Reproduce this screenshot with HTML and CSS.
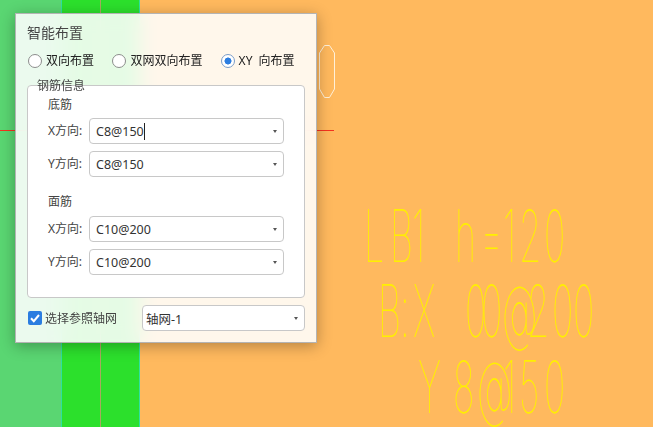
FILE: index.html
```html
<!DOCTYPE html>
<html lang="zh-CN">
<head>
  <meta charset="UTF-8" />
  <title>智能布置</title>
  <link rel="stylesheet" href="styles.css">
</head>
<body>
  <div class="canvas">
    <div class="strip-light"></div>
    <div class="strip-green"><div class="axis-line"></div></div>
    <div class="strip-orange"></div>

    <svg class="drawing" width="653" height="427" viewBox="0 0 653 427">
      <line class="red" x1="0" y1="130.5" x2="334" y2="130.5" />
      <polygon class="octagon" points="324.5,45.5 329.5,45.5 334.5,53 334.5,89 329.5,97.5 324.5,97.5 319.5,89 319.5,53" />
      <g transform="scale(0.5 1)">
        <text class="cad" x="728 780 824 870 910 960 1006 1038 1088" y="262">LB1 h=120</text>
        <text class="cad" x="756 800 826 900 930 962 1004 1054 1104 1146" y="337">B:X 00@200</text>
        <text class="cad" x="836 880 906 954 1006 1038 1088" y="413">Y 8@150</text>
      </g>
    </svg>

    <div class="dialog">
      <div class="title">智能布置</div>

      <div class="radios">
        <label class="radio"><span class="radio-dot"></span>双向布置</label>
        <label class="radio"><span class="radio-dot"></span>双网双向布置</label>
        <label class="radio checked"><span class="radio-dot"></span>XY 向布置</label>
      </div>

      <div class="group">
        <div class="legend">钢筋信息</div>

        <div class="sub-title">底筋</div>
        <div class="row">
          <span class="row-label">X方向:</span>
          <div class="combo"><span>C8@150</span><i class="caret-bar"></i><b class="arrow"></b></div>
        </div>
        <div class="row">
          <span class="row-label">Y方向:</span>
          <div class="combo"><span>C8@150</span><b class="arrow"></b></div>
        </div>

        <div class="sub-title second">面筋</div>
        <div class="row">
          <span class="row-label">X方向:</span>
          <div class="combo"><span>C10@200</span><b class="arrow"></b></div>
        </div>
        <div class="row">
          <span class="row-label">Y方向:</span>
          <div class="combo"><span>C10@200</span><b class="arrow"></b></div>
        </div>
      </div>

      <div class="footer">
        <label class="check">
          <span class="check-box">
            <svg width="14" height="14" viewBox="0 0 14 14"><path d="M3 7.2 L5.8 10.2 L11 4" fill="none" stroke="#fff" stroke-width="2" /></svg>
          </span>
          选择参照轴网
        </label>
        <div class="combo grid-combo"><span>轴网-1</span><b class="arrow"></b></div>
      </div>
    </div>
  </div>
</body>
</html>
```

FILE: styles.css
```css
* {
  box-sizing: border-box;
}

body {
  margin: 0;
  font-family: "Noto Sans", "Noto Sans CJK SC", sans-serif;
  font-size: 12px;
  color: #333;
}

.canvas {
  position: relative;
  display: flex;
  width: 653px;
  height: 427px;
  overflow: hidden;
}

.strip-light {
  width: 61px;
  background: #5ad672;
}

.strip-green {
  width: 79px;
  background: #2ce02c;
  border-left: 1px solid #2fe0a0;
  border-right: 1px solid #2fe0a0;
  padding-left: 38px;
}

.axis-line {
  width: 1px;
  height: 100%;
  background: #a8a860;
}

.strip-orange {
  flex: 1;
  background: #ffb95e;
}

.drawing {
  position: absolute;
  left: 0;
  top: 0;
}

.red {
  stroke: #f5321e;
  stroke-width: 1;
}

.octagon {
  fill: none;
  stroke: #fff0d8;
  stroke-width: 1;
}

.cad {
  font-family: Inter, "Liberation Sans", sans-serif;
  font-weight: 100;
  font-size: 72px;
  fill: #fff000;
}

/* dialog */
.dialog {
  position: absolute;
  left: 15px;
  top: 13px;
  width: 302px;
  height: 330px;
  padding: 0 11px;
  background: rgba(255, 255, 255, 0.88);
  backdrop-filter: blur(10px);
  border: 1px solid #b4b4b4;
  box-shadow: 0 3px 14px rgba(0, 0, 0, 0.3);
}

.title {
  height: 37px;
  padding-top: 9px;
  font-size: 14px;
  line-height: 19px;
  color: #444;
}

.radios {
  display: flex;
  height: 20px;
  align-items: center;
  padding-left: 1px;
  color: #222;
  white-space: nowrap;
  word-spacing: 3px;
}

.radio {
  display: flex;
  align-items: center;
  gap: 4px;
  width: 85px;
  line-height: 20px;
}

.radio:nth-child(2) {
  width: 109px;
}

.radio-dot {
  width: 14px;
  height: 14px;
  border: 1px solid #8c8c8c;
  border-radius: 50%;
  background: #fff;
}

.checked .radio-dot {
  border-color: #7a9cc8;
  background: radial-gradient(circle, #2b7de0 0 3.2px, #fff 3.8px);
}

.group {
  position: relative;
  height: 213px;
  margin-top: 14px;
  padding: 10px 20px 0 19px;
  background: #fff;
  border: 1px solid #c8c8c8;
  border-radius: 4px;
}

.legend {
  position: absolute;
  left: 9px;
  top: -9px;
  line-height: 18px;
  color: #444;
}

.sub-title {
  height: 18px;
  line-height: 18px;
  margin-bottom: 4px;
  padding-left: 1px;
  color: #444;
}

.sub-title.second {
  margin-top: 16px;
  margin-bottom: 5px;
}

.row {
  display: flex;
  align-items: center;
  margin-bottom: 7px;
}

.row-label {
  width: 42px;
  padding: 0 0 2px 1px;
  color: #444;
  white-space: nowrap;
}

.combo {
  position: relative;
  display: flex;
  align-items: center;
  flex: 1;
  height: 26px;
  padding-left: 6px;
  background: #fff;
  border: 1px solid #c8c8c8;
  border-radius: 4px;
  font-size: 12.5px;
  color: #333;
}

.arrow {
  position: absolute;
  right: 6px;
  top: 11px;
  border-left: 2.5px solid transparent;
  border-right: 2.5px solid transparent;
  border-top: 3px solid #555;
}

.caret-bar {
  width: 1px;
  height: 17px;
  background: #222;
}

.footer {
  display: flex;
  align-items: center;
  justify-content: space-between;
  margin-top: 7px;
}

.check {
  display: flex;
  align-items: center;
  gap: 3px;
  padding-left: 1px;
  color: #444;
}

.check-box {
  display: flex;
  width: 14px;
  height: 14px;
  background: #2b7de0;
  border-radius: 2px;
}

.grid-combo {
  flex: none;
  width: 163px;
  padding-left: 3px;
}
```
